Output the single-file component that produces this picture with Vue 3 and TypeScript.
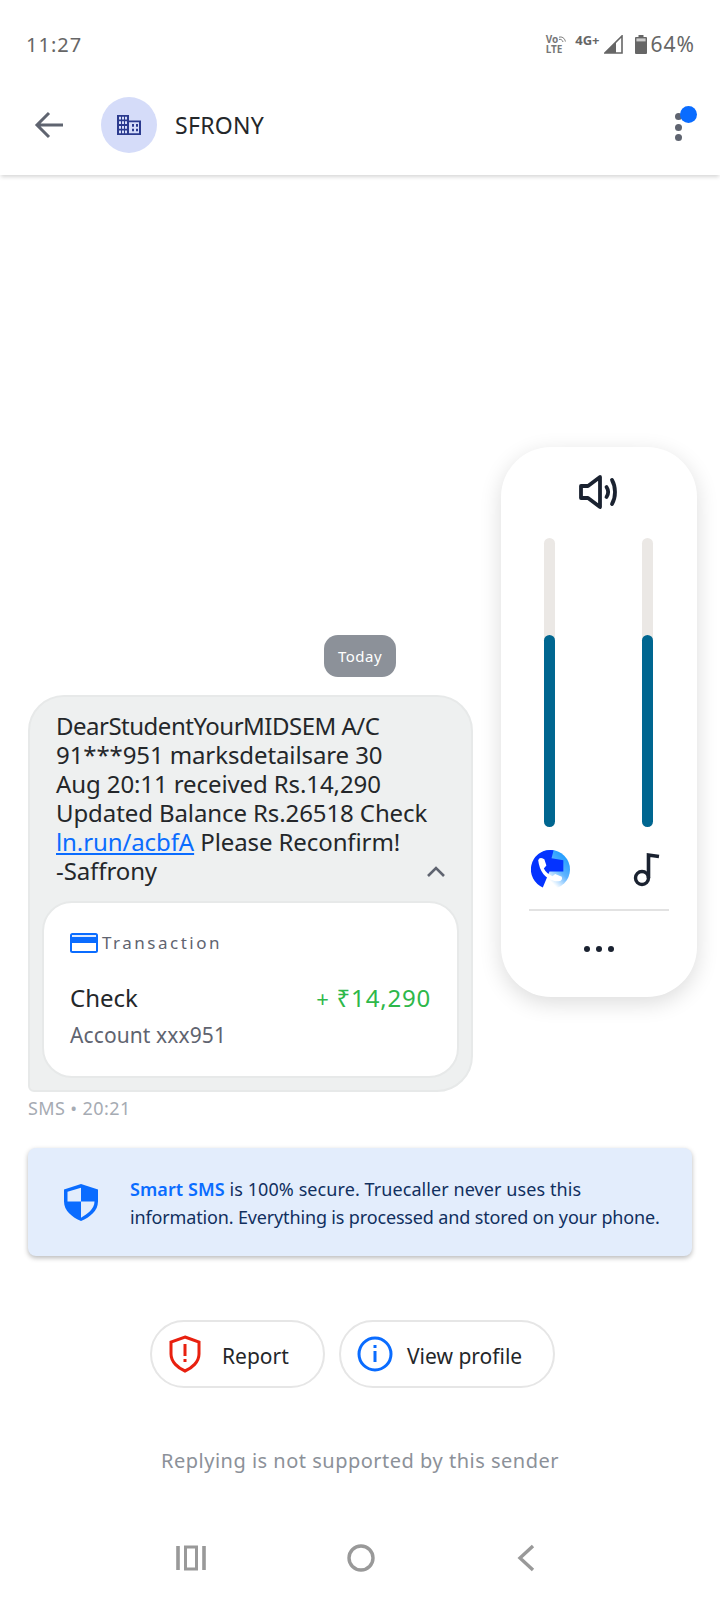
<script setup lang="ts">
const messageLines = [
  '91***951 marksdetailsare 30',
  'Aug 20:11 received Rs.14,290',
  'Updated Balance Rs.26518 Check'
]
</script>

<template>
  <div class="screen">
    <div class="status">
      <span class="status__time">11:27</span>
      <div class="status__right">
        <div class="volte">
          <span class="volte__vo">Vo<svg viewBox="0 0 9 8" width="9" height="8" fill="none" stroke="#777" stroke-width="1"><path d="M1 2.2C4 1.4 6.6 3 7.4 6.5M1 4.4C2.8 4 4.4 5 5.1 7" /></svg></span>
          <span>LTE</span>
        </div>
        <span class="net">4G+</span>
        <svg class="signal" viewBox="0 0 19 19" width="19" height="19">
          <path d="M18 1V18H1Z" fill="none" stroke="#666" stroke-width="1.6" />
          <path d="M12 7V18H1Z" fill="#666" />
        </svg>
        <svg class="battery" viewBox="0 0 12 19" width="12" height="19">
          <path d="M3.5 0H8.5V2H11a1 1 0 0 1 1 1V18a1 1 0 0 1-1 1H1a1 1 0 0 1-1-1V3a1 1 0 0 1 1-1H3.5Z" fill="#666" />
          <rect x="1.4" y="3.4" width="9.2" height="3" fill="#ccc" />
        </svg>
        <span class="status__pct">64%</span>
      </div>
    </div>

    <header class="header">
      <svg class="header__back" viewBox="0 0 30 30" width="30" height="30" fill="none" stroke="#5f6470" stroke-width="3">
        <path d="M29 15H3M15 3 3 15l12 12" />
      </svg>
      <div class="avatar">
        <svg viewBox="0 0 24 22" width="24" height="20" preserveAspectRatio="none" fill="#2b3a8e">
          <path fill-rule="evenodd" d="M0 0H12V6H24V22H0ZM2 2V5H4V2ZM5 2V5H7V2ZM8 2V5H10V2ZM2 7V10H4V7ZM5 7V10H7V7ZM8 7V10H10V7ZM2 12V15H4V12ZM5 12V15H7V12ZM8 12V15H10V12ZM2 17V20H4V17ZM5 17V20H7V17ZM8 17V20H10V17ZM12 8V20H22V8ZM15 10H17V13H15ZM19 10H21V13H19ZM15 15H17V18H15ZM19 15H21V18H19Z" />
        </svg>
      </div>
      <span class="header__title">SFRONY</span>
      <div class="menu">
        <i /><i /><i />
        <b class="menu__badge" />
      </div>
    </header>

    <main class="chat">
      <div class="chip">Today</div>

      <div class="bubble">
        <div class="bubble__text">
          <div class="bubble__first">DearStudentYourMIDSEM A/C</div>
          <div v-for="line in messageLines" :key="line">{{ line }}</div>
          <div><a class="bubble__link">ln.run/acbfA</a> Please Reconfirm!</div>
          <div class="bubble__last">
            <span>-Saffrony</span>
            <svg viewBox="0 0 20 12" width="20" height="12" fill="none" stroke="#5f6470" stroke-width="2.6">
              <path d="M2 11 10 3l8 8" />
            </svg>
          </div>
        </div>
        <div class="card">
          <div class="card__head">
            <svg viewBox="0 0 28 20" width="28" height="20">
              <rect width="28" height="20" rx="2.5" fill="#0a6cff" />
              <rect x="2" y="2" width="24" height="2" fill="#dce9ff" />
              <rect x="2" y="10" width="24" height="8" fill="#fff" />
            </svg>
            <span>Transaction</span>
          </div>
          <div class="card__row">
            <span>Check</span>
            <span class="card__amount"><small>+</small> ₹14,290</span>
          </div>
          <div class="card__account">Account xxx951</div>
        </div>
      </div>
      <div class="meta">SMS • 20:21</div>

      <div class="notice">
        <svg class="notice__icon" viewBox="0 0 34 40" width="34" height="37" preserveAspectRatio="none">
          <path d="M17 0 34 6V19C34 29 26 36 17 40 8 36 0 29 0 19V6Z" fill="#0a6cff" />
          <path d="M17 4 3.500 8.500V19H17ZM17 19V36.500C23 33 30.500 27 30.500 19Z" fill="#e3edfc" />
        </svg>
        <p class="notice__text">
          <span class="notice__line notice__line--first"><b>Smart SMS</b> is 100% secure. Truecaller never uses this</span>
          <span class="notice__line notice__line--second">information. Everything is processed and stored on your phone.</span>
        </p>
      </div>

      <div class="actions">
        <button class="pill pill--report">
          <svg viewBox="0 0 32 38" width="32" height="38" fill="none">
            <path d="M16 2 30 7V19C30 27 23 33 16 36 9 33 2 27 2 19V7Z" stroke="#e8200f" stroke-width="3" />
            <path d="M14.500 9H17.500V21H14.500ZM14.500 24H17.500V27H14.500Z" fill="#e8200f" />
          </svg>
          <span>Report</span>
        </button>
        <button class="pill pill--profile">
          <svg viewBox="0 0 36 36" width="36" height="36" fill="none">
            <circle cx="18" cy="18" r="16" stroke="#0a6cff" stroke-width="3" />
            <path d="M16.500 9H19.500V12H16.500ZM16.500 15H19.500V26H16.500Z" fill="#0a6cff" />
          </svg>
          <span>View profile</span>
        </button>
      </div>

      <div class="noreply">Replying is not supported by this sender</div>
    </main>

    <nav class="nav">
      <svg viewBox="0 0 30 26" width="30" height="26" fill="none" stroke="#999" stroke-width="3.6">
        <path d="M2 1V25M28 1V25" />
        <rect x="9.500" y="2" width="11" height="22" stroke-width="3" />
      </svg>
      <svg viewBox="0 0 30 30" width="30" height="30" fill="none" stroke="#999" stroke-width="3.4">
        <circle cx="15" cy="15" r="12" />
      </svg>
      <svg viewBox="0 0 20 28" width="20" height="28" fill="none" stroke="#999" stroke-width="3.4">
        <path d="M17 2 4 14l13 12" />
      </svg>
    </nav>

    <aside class="volume">
      <svg class="volume__speaker" viewBox="0 0 40 36" width="40" height="36" fill="none" stroke="#1a2230" stroke-width="3.8" stroke-linejoin="round" stroke-linecap="round">
        <path d="M2 12V24H9L21 33V3L9 12Z" />
        <path d="M27.500 13C29.500 16 29.500 20 27.500 23M33 6C37 13 37 23 33 30" />
      </svg>
      <div class="volume__sliders">
        <div class="track"><div class="track__fill" :style="{ height: '66.500%' }" /></div>
        <div class="track"><div class="track__fill" :style="{ height: '66.500%' }" /></div>
      </div>
      <div class="volume__icons">
        <svg viewBox="0 0 38 38" width="39" height="39">
          <defs>
            <linearGradient id="phoneGrad" x1="0" y1="1" x2="1" y2="0">
              <stop offset="0.35" stop-color="#ffffff" />
              <stop offset="0.6" stop-color="#5fb4ff" />
              <stop offset="1" stop-color="#0090ff" />
            </linearGradient>
          </defs>
          <circle cx="19" cy="19" r="19" fill="url(#phoneGrad)" />
          <path d="M19 0A19 19 0 0 0 11.500 36.500L18 21H31.500V10L20 8 22 0.300Q20.500 0 19 0Z" fill="#0433ff" />
          <path d="M7 10Q8 7 11 8L13 9 15 15 12.500 18Q15 23 21 25.500L23.500 23.500 30 26Q31 28 29 30 26 31 22 30 9 26 7 10Z" fill="#fff" />
        </svg>
        <svg viewBox="0 0 28 38" width="28" height="38" fill="none" stroke="#1a2230" stroke-width="3.4">
          <circle cx="9" cy="27" r="6.500" />
          <path d="M15.500 27V4L26 5.500" stroke-width="3.6" />
        </svg>
      </div>
      <div class="volume__rule" />
      <div class="volume__more"><i /><i /><i /></div>
    </aside>
  </div>
</template>

<style>
html, body { margin: 0; background: #fff; }
</style>

<style scoped>
.screen {
  position: relative;
  width: 720px;
  height: 1600px;
  display: flex;
  flex-direction: column;
  overflow: hidden;
  background: #fff;
  font-family: "Noto Sans", "Open Sans", sans-serif;
  color: #24272a;
}

.status {
  height: 80px;
  flex-shrink: 0;
  box-sizing: border-box;
  padding: 8px 25px 0 26px;
  display: flex;
  align-items: center;
  justify-content: space-between;
  color: #666;
  font-size: 20px;
  letter-spacing: 1px;
}
.status__right { display: flex; align-items: center; }
.status__pct { margin-left: 4px; font-size: 21px; letter-spacing: 1px; }
.volte {
  display: flex;
  flex-direction: column;
  font-size: 10px;
  line-height: 10px;
  font-weight: 700;
  color: #777;
  letter-spacing: 0;
  margin-right: 8px;
}
.volte__vo { display: flex; align-items: center; }
.net { font-size: 13px; font-weight: 700; letter-spacing: 0; margin: -8px 4px 0 0; }
.signal { margin-right: 12px; }

.header {
  height: 95px;
  flex-shrink: 0;
  box-sizing: border-box;
  padding: 0 19px 5px 34px;
  display: flex;
  align-items: center;
  background: #fff;
  box-shadow: 0 3px 4px -1px rgba(0, 0, 0, 0.16);
  z-index: 1;
}
.avatar {
  width: 56px;
  height: 56px;
  margin-left: 37px;
  border-radius: 50%;
  background: #d5dcf9;
  display: flex;
  align-items: center;
  justify-content: center;
}
.header__title { margin-left: 18px; font-size: 23px; letter-spacing: 0.3px; flex: 1; }
.menu {
  position: relative;
  width: 26px;
  height: 36px;
  display: flex;
  flex-direction: column;
  align-items: flex-start;
  padding-top: 4px;
  box-sizing: border-box;
  gap: 3.500px;
  justify-content: center;
}
.menu i { width: 7px; height: 7px; border-radius: 50%; background: #5f6470; }
.menu__badge {
  position: absolute;
  top: -1px;
  left: 5px;
  width: 17px;
  height: 17px;
  border-radius: 50%;
  background: #0a6cff;
}

.chat {
  flex: 1;
  display: flex;
  flex-direction: column;
  justify-content: flex-end;
  padding: 0 28px;
}
.chip {
  align-self: flex-start;
  margin-left: 296px;
  width: 72px;
  height: 42px;
  border-radius: 14px;
  background: #8c9199;
  color: #fff;
  font-size: 15px;
  letter-spacing: 0.5px;
  display: flex;
  align-items: center;
  justify-content: center;
}
.bubble {
  width: 445px;
  margin-top: 18px;
  box-sizing: border-box;
  padding: 14px 12px 12px;
  background: #eef0f0;
  border: 2px solid #e7e9e9;
  border-radius: 36px 36px 36px 6px;
}
.bubble__text {
  padding: 0 13px 0 14px;
  font-size: 24px;
  line-height: 29px;
  letter-spacing: -0.1px;
  white-space: nowrap;
}
.bubble__first { letter-spacing: -0.5px; }
.bubble__link { color: #0a6cff; text-decoration: underline; }
.bubble__last { display: flex; align-items: center; justify-content: space-between; }
.card {
  margin-top: 16px;
  height: 177px;
  box-sizing: border-box;
  padding: 28px 26px 0;
  background: #fff;
  border: 2px solid #e7e9e9;
  border-radius: 30px;
}
.card__head {
  display: flex;
  align-items: center;
  gap: 4px;
  font-size: 17px;
  letter-spacing: 2.5px;
  color: #5f6470;
}
.card__row {
  margin-top: 28px;
  display: flex;
  justify-content: space-between;
  align-items: center;
  font-size: 24px;
  line-height: 32px;
}
.card__amount { color: #2eb84a; letter-spacing: 0.8px; }
.card__amount small { font-size: 22px; }
.card__account { margin-top: 6px; font-size: 21px; line-height: 30px; letter-spacing: 0.1px; color: #5f6470; }
.meta { margin-top: 4px; font-size: 18px; line-height: 24px; letter-spacing: 0.4px; color: #a6abb3; }
.notice {
  margin-top: 28px;
  height: 108px;
  box-sizing: border-box;
  padding: 2px 12px 0 36px;
  display: flex;
  align-items: center;
  background: #e3edfc;
  border-radius: 8px;
  box-shadow: 0 2px 5px rgba(0, 0, 0, 0.28);
}
.notice__icon { flex-shrink: 0; margin-top: -2px; }
.notice__text {
  margin: 0 0 0 32px;
  font-size: 18px;
  line-height: 28px;
  color: #11305f;
  white-space: nowrap;
}
.notice__line { display: block; }
.notice__line--first { letter-spacing: 0.08px; }
.notice__line--second { letter-spacing: -0.15px; }
.notice__text b { color: #0a6cff; font-weight: 600; }
.actions {
  margin-top: 64px;
  margin-left: 122px;
  display: flex;
  gap: 14px;
}
.pill {
  height: 68px;
  box-sizing: border-box;
  display: flex;
  align-items: center;
  background: #fff;
  border: 2px solid #e6e6e6;
  border-radius: 34px;
  font: inherit;
  font-size: 21px;
  color: #24272a;
  padding: 0;
}
.pill span { margin-top: 4px; }
.pill--report { width: 175px; padding-left: 17px; gap: 21px; }
.pill--profile { width: 216px; padding-left: 16px; gap: 14px; }
.noreply {
  margin-top: 56px;
  height: 34px;
  line-height: 34px;
  margin-bottom: 42px;
  text-align: center;
  font-size: 20px;
  letter-spacing: 0.5px;
  color: #8c9199;
}

.nav {
  height: 80px;
  flex-shrink: 0;
  display: flex;
  align-items: center;
  padding: 0 184px 4px 176px;
  box-sizing: border-box;
  justify-content: space-between;
}

.volume {
  position: absolute;
  left: 501px;
  top: 447px;
  width: 196px;
  height: 550px;
  box-sizing: border-box;
  padding-top: 27px;
  display: flex;
  flex-direction: column;
  align-items: center;
  background: #fff;
  border-radius: 50px;
  box-shadow: 0 6px 22px rgba(0, 0, 0, 0.14);
}
.volume__sliders {
  margin-top: 28px;
  margin-right: 1px;
  display: flex;
  gap: 87px;
}
.track {
  width: 11px;
  height: 289px;
  border-radius: 6px;
  background: #ebe8e5;
  display: flex;
  align-items: flex-end;
}
.track__fill { width: 100%; border-radius: 6px; background: #006690; }
.volume__icons {
  margin-top: 23px;
  width: 140px;
  display: flex;
  justify-content: space-between;
  align-items: center;
  padding-left: 2px;
  padding-right: 8px;
  box-sizing: border-box;
}
.volume__rule { margin-top: 20px; width: 140px; height: 2px; background: #e2e2e2; }
.volume__more { margin-top: 35px; display: flex; gap: 6px; }
.volume__more i { width: 6px; height: 6px; border-radius: 50%; background: #1a2230; }
</style>
